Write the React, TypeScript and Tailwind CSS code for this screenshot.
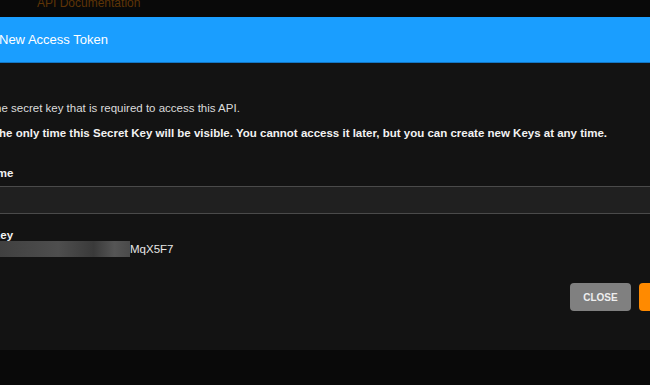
import React from "react";

export default function App() {
  return (
    <div
      className="w-[650px] h-[385px] overflow-hidden bg-[#090909] text-white"
      style={{ fontFamily: '"Liberation Sans", Arial, sans-serif' }}
    >
      <div className="h-[17px] overflow-hidden">
        <div className="mt-[-4px] pl-[37px] text-[12px] leading-[14px] text-[#5e3406]">API Documentation</div>
      </div>
      <div className="ml-[-8px] w-[743px] flex flex-col">
        <div className="h-[46px] bg-[#1a9eff] border-b border-[#1477c4] flex items-center pl-[7px] text-[13px] text-white">
          New Access Token
        </div>
        <div className="bg-[#131313] pt-[38px] pb-[39px]">
          <div className="ml-[-4px] text-[11.5px] leading-[14px] text-[#dcdcdc]">The secret key that is required to access this API.</div>
          <div className="mt-[11px] text-[11.5px] leading-[14px] font-bold text-[#f2f2f2]">
            The only time this Secret Key will be visible. You cannot access it later, but you can create new Keys at any time.
          </div>
          <div className="mt-[26px] ml-[-10px] text-[11.5px] leading-[14px] font-bold text-[#f2f2f2]">Name</div>
          <div className="mt-[6px] h-[28px] bg-[#202020] border-y border-[#4a4a4a]"></div>
          <div className="mt-[15px] text-[11.5px] leading-[12px] font-bold text-[#f2f2f2]">Key</div>
          <div className="flex items-center h-[16px] pl-[8px]">
            <div className="w-[130px] h-[16px] bg-[linear-gradient(90deg,#404040_0%,#4e4e4e_45%,#3a3a3a_72%,#555555_88%,#4a4a4a_100%)]"></div>
            <span className="text-[11.5px] leading-[16px] text-[#e6e6e6]">MqX5F7</span>
          </div>
          <div className="mt-[26px] flex justify-end gap-[8px] pr-[16px]">
            <button className="w-[61px] h-[28px] rounded-[4px] bg-[#808080] text-[10px] font-bold text-[#eeeeee]">CLOSE</button>
            <button className="w-[80px] h-[28px] rounded-[4px] bg-[#ff8a00] text-[10px] font-bold text-white">CREATE</button>
          </div>
        </div>
      </div>
    </div>
  );
}
